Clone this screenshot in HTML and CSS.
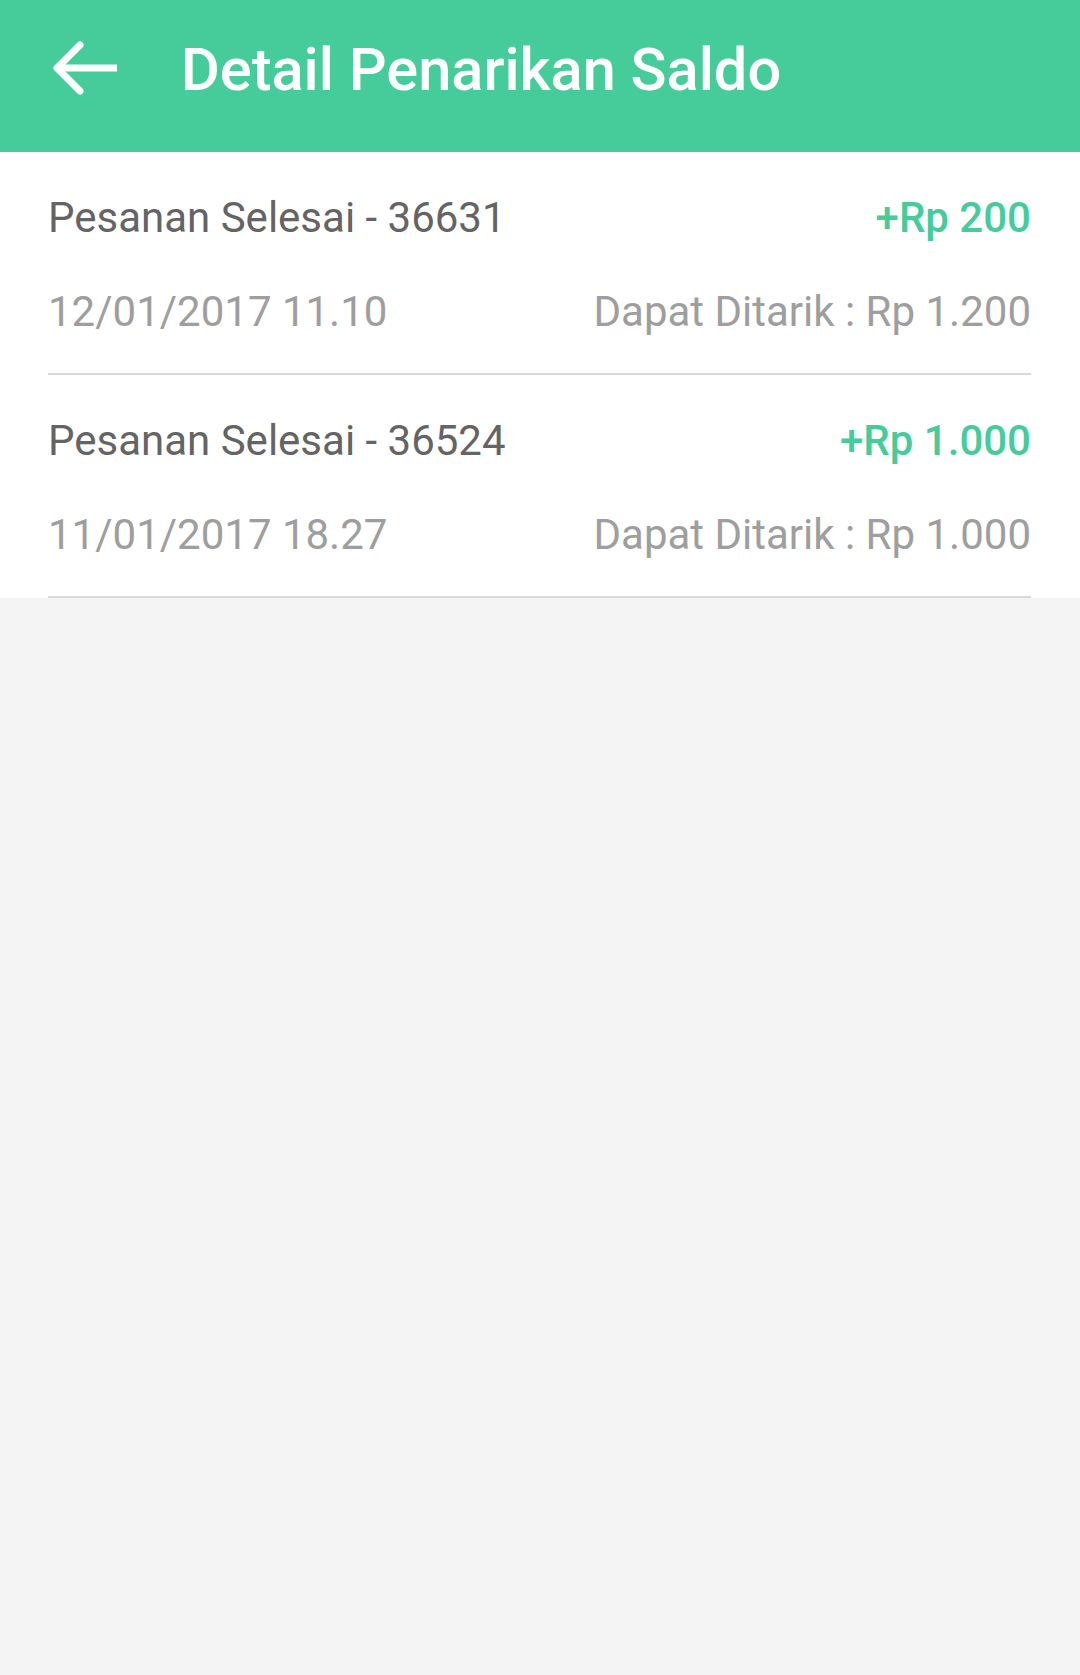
FILE: index.html
```html
<!DOCTYPE html>
<html lang="id">
<head>
<meta charset="utf-8">
<title>Detail Penarikan Saldo</title>
<link rel="stylesheet" href="styles.css">
</head>
<body>
<header class="appbar">
  <svg class="back" width="72" height="60" viewBox="0 0 72 60" aria-hidden="true">
    <path d="M9 30 H69" fill="none" stroke="#fff" stroke-width="7"/>
    <path d="M32 7 L9 30 L32 53" fill="none" stroke="#fff" stroke-width="7" stroke-linejoin="round" stroke-linecap="round"/>
  </svg>
  <h1 class="title">Detail Penarikan Saldo</h1>
</header>
<main class="list">
  <div class="row">
    <div class="line">
      <span class="name">Pesanan Selesai - 36631</span>
      <span class="amount">+Rp 200</span>
    </div>
    <div class="line sub">
      <span>12/01/2017 11.10</span>
      <span>Dapat Ditarik : Rp 1.200</span>
    </div>
  </div>
  <div class="row">
    <div class="line">
      <span class="name">Pesanan Selesai - 36524</span>
      <span class="amount">+Rp 1.000</span>
    </div>
    <div class="line sub">
      <span>11/01/2017 18.27</span>
      <span>Dapat Ditarik : Rp 1.000</span>
    </div>
  </div>
</main>
</body>
</html>
```

FILE: styles.css
```css
html, body {
  margin: 0;
  padding: 0;
}
body {
  background: #f4f4f4;
  font-family: Roboto, "Liberation Sans", sans-serif;
  min-height: 1675px;
}
.appbar {
  background: #46cc9b;
  height: 152px;
  box-sizing: border-box;
  display: flex;
  align-items: flex-start;
  padding-top: 35px;
}
.back {
  margin-left: 48px;
  margin-top: 3px;
  flex: none;
}
.title {
  margin: 0 0 0 61px;
  color: #fff;
  font-size: 59.5px;
  line-height: 70px;
  font-weight: 500;
}
.list {
  background: #fff;
  padding: 0 49px 0 48px;
}
.row {
  padding: 42px 0 37px;
  border-bottom: 2px solid #d9d9d9;
}
.line {
  display: flex;
  justify-content: space-between;
  font-size: 42px;
  line-height: 48px;
  color: #646464;
}
.line.sub {
  margin-top: 46px;
  color: #9e9e9e;
}
.amount {
  color: #46cc9b;
  font-weight: 500;
}
```
